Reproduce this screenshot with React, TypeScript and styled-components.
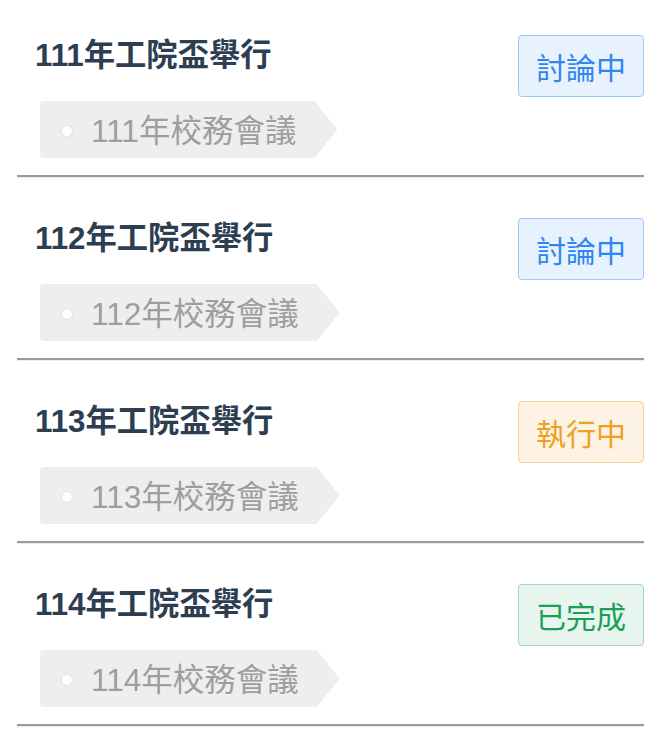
import React from 'react';
import styled, { createGlobalStyle } from 'styled-components';

type Status = 'discussing' | 'running' | 'done';

interface Meeting {
  id: number;
  title: string;
  source: string;
  status: Status;
}

const GlobalStyle = createGlobalStyle`
  body {
    margin: 0;
    background: #ffffff;
    font-family: "Liberation Sans", "Noto Sans CJK TC", sans-serif;
  }
`;

const statusColors: Record<Status, { text: string; bg: string; border: string; label: string }> = {
  discussing: { text: '#2f86f0', bg: '#e8f2fe', border: '#9fc6f6', label: '討論中' },
  running: { text: '#f0a020', bg: '#fdf3e5', border: '#f6d39a', label: '執行中' },
  done: { text: '#18a058', bg: '#e7f5ee', border: '#9ed8ba', label: '已完成' },
};

const meetings: Meeting[] = [
  { id: 1, title: '111年工院盃舉行', source: '111年校務會議', status: 'discussing' },
  { id: 2, title: '112年工院盃舉行', source: '112年校務會議', status: 'discussing' },
  { id: 3, title: '113年工院盃舉行', source: '113年校務會議', status: 'running' },
  { id: 4, title: '114年工院盃舉行', source: '114年校務會議', status: 'done' },
];

const List = styled.div`
  padding: 0 26px 0 17px;
`;

const Item = styled.div`
  display: flex;
  justify-content: space-between;
  align-items: flex-start;
  padding: 35px 0 17px 16px;
`;

const Divider = styled.hr`
  height: 0;
  margin: 0 0 5px;
  border: none;
  border-top: 2px solid #9b9b9b;
  border-bottom: 1px solid #ececec;
`;

const Info = styled.div`
  display: flex;
  flex-direction: column;
  align-items: flex-start;
`;

const Title = styled.div`
  font-size: 31.3px;
  line-height: 38px;
  font-weight: bold;
  color: #2c3e50;
  padding: 2px 0 0 2px;
  margin-bottom: 26px;
`;

const Tag = styled.div`
  display: inline-flex;
  align-items: center;
  box-sizing: border-box;
  height: 57px;
  margin-left: 7px;
  padding: 0 41px 4px 21px;
  background: #eeeeee;
  border-radius: 4px 0 0 4px;
  clip-path: polygon(0 0, calc(100% - 23px) 0, 100% 50%, calc(100% - 23px) 100%, 0 100%);
  color: #9e9e9e;
  font-size: 31.5px;
`;

const Dot = styled.span`
  box-sizing: border-box;
  width: 12px;
  height: 12px;
  margin: 6px 18px 0 0;
  border-radius: 50%;
  background: #ffffff;
  border: 1px solid #e2e2e2;
  flex-shrink: 0;
`;

const Badge = styled.div<{ $status: Status }>`
  display: flex;
  align-items: center;
  justify-content: center;
  box-sizing: border-box;
  height: 62px;
  padding: 0 17px;
  border-radius: 4px;
  font-size: 30px;
  color: ${p => statusColors[p.$status].text};
  background: ${p => statusColors[p.$status].bg};
  border: 1px solid ${p => statusColors[p.$status].border};
`;

const App: React.FC = () => {
  return (
    <>
      <GlobalStyle />
      <List>
        {meetings.map(m => (
          <React.Fragment key={m.id}>
            <Item>
              <Info>
                <Title>{m.title}</Title>
                <Tag>
                  <Dot />
                  {m.source}
                </Tag>
              </Info>
              <Badge $status={m.status}>{statusColors[m.status].label}</Badge>
            </Item>
            <Divider />
          </React.Fragment>
        ))}
      </List>
    </>
  );
};

export default App;
